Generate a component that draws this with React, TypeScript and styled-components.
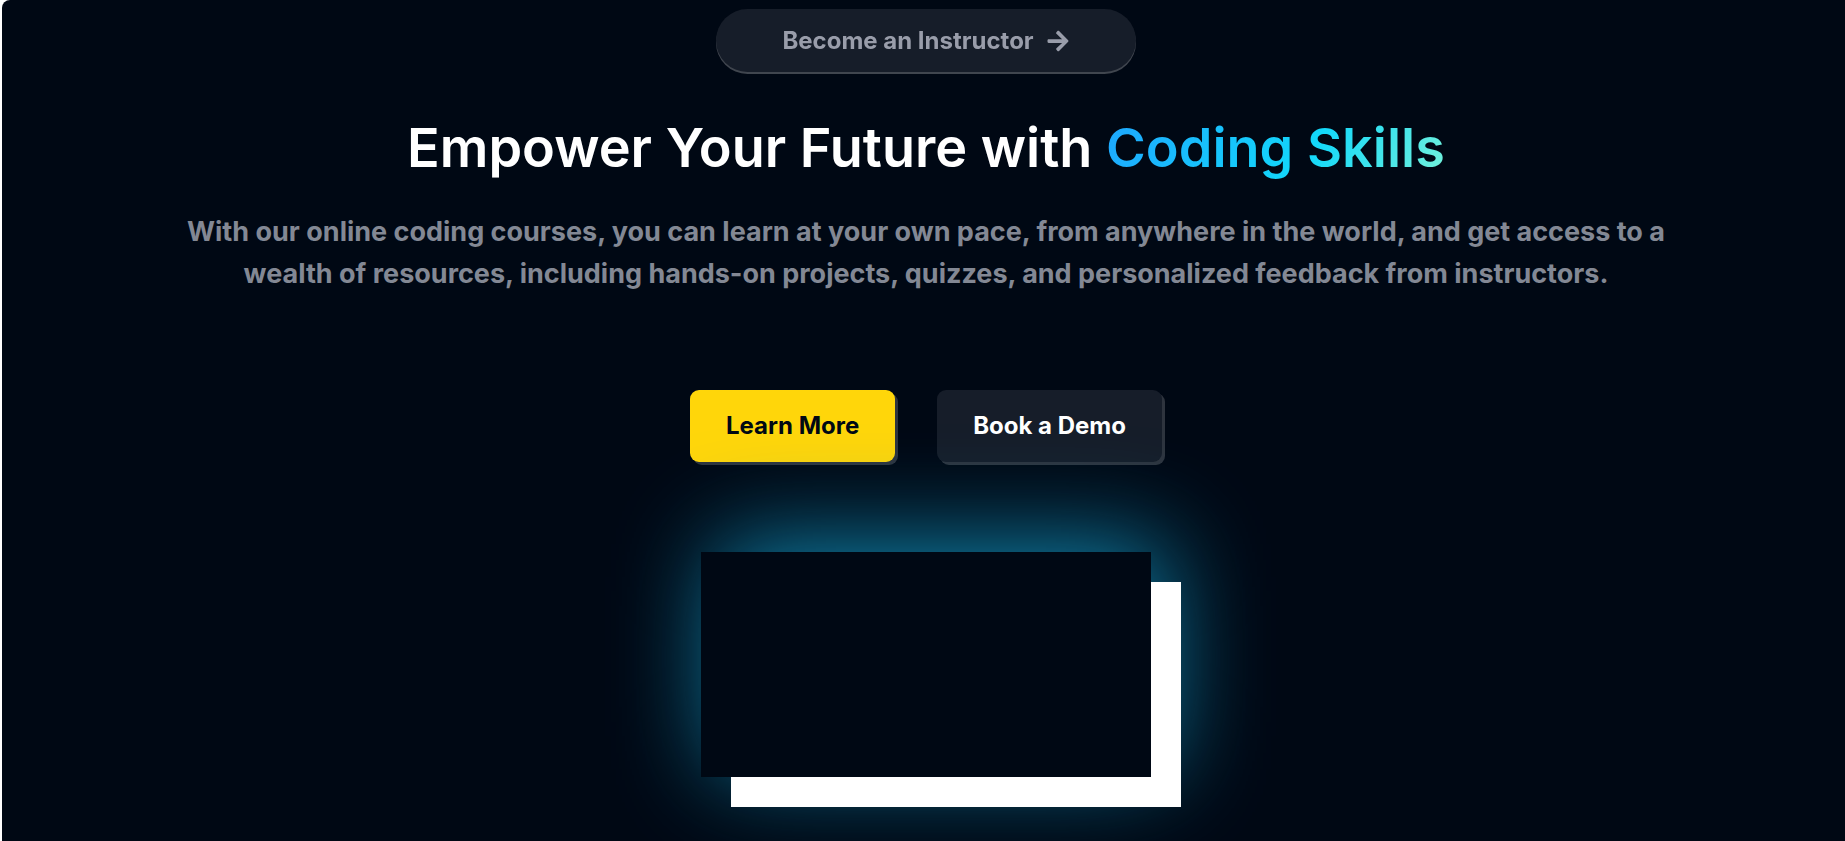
import React from 'react';
import styled, { createGlobalStyle } from 'styled-components';
import { FaArrowRight } from 'react-icons/fa';

const GlobalStyle = createGlobalStyle`
  html, body {
    margin: 0;
    padding: 0;
    background: #ffffff;
  }

  body {
    font-family: Inter, "Noto Sans", "Liberation Sans", sans-serif;
    overflow: hidden;
  }
`;

const Hero = styled.section`
  margin-left: 2px;
  min-height: 100vh;
  padding-left: 5px;
  background: #000814;
  border-top-left-radius: 8px;
  display: flex;
  flex-direction: column;
  align-items: center;
  overflow: hidden;
`;

const InstructorPill = styled.button`
  margin-top: 9px;
  padding: 6px;
  border: none;
  border-radius: 999px;
  background: #161d29;
  color: #999daa;
  font-family: inherit;
  font-size: 24px;
  font-weight: 700;
  cursor: pointer;
  filter: drop-shadow(0 2px 0 rgba(255, 255, 255, 0.25));
`;

const PillInner = styled.span`
  display: flex;
  align-items: center;
  gap: 12px;
  padding: 7.5px 60px;
  line-height: 36px;
`;

const Heading = styled.h1`
  margin: 46px 0 0;
  color: #ffffff;
  font-size: 54px;
  font-weight: 600;
  line-height: 60px;
  text-align: center;
`;

const Highlight = styled.span`
  background: linear-gradient(118deg, #1fa2ff -6%, #12d8fa 60%, #a6ffcb 120%);
  -webkit-background-clip: text;
  background-clip: text;
  color: transparent;
`;

const Subtitle = styled.p`
  margin: 33px 0 0;
  max-width: 1500px;
  color: #838894;
  font-size: 27px;
  font-weight: 700;
  line-height: 42px;
  text-align: center;
`;

const ButtonRow = styled.div`
  margin-top: 95px;
  display: flex;
  gap: 42px;
`;

const CtaButton = styled.button<{ $active?: boolean }>`
  padding: 18px 36px;
  border: none;
  border-radius: 9px;
  background: ${p => (p.$active ? '#ffd60a' : '#161d29')};
  color: ${p => (p.$active ? '#000814' : '#ffffff')};
  font-family: inherit;
  font-size: 24px;
  font-weight: 700;
  line-height: 36px;
  box-shadow: 3px 3px 0 0 rgba(255, 255, 255, 0.18);
  cursor: pointer;
`;

const VideoGlow = styled.div`
  margin-top: 90px;
  box-shadow: 15px -8px 100px 0 #118ab2;
`;

const VideoFrame = styled.div`
  width: 450px;
  height: 225px;
  background: #000814;
  box-shadow: 30px 30px 0 0 #ffffff;
`;

const App: React.FC = () => {
  return (
    <>
      <GlobalStyle />
      <Hero>
        <InstructorPill>
          <PillInner>
            Become an Instructor
            <FaArrowRight />
          </PillInner>
        </InstructorPill>

        <Heading>
          Empower Your Future with <Highlight>Coding Skills</Highlight>
        </Heading>

        <Subtitle>
          With our online coding courses, you can learn at your own pace, from anywhere in the
          world, and get access to a wealth of resources, including hands-on projects, quizzes, and
          personalized feedback from instructors.
        </Subtitle>

        <ButtonRow>
          <CtaButton $active>Learn More</CtaButton>
          <CtaButton>Book a Demo</CtaButton>
        </ButtonRow>

        <VideoGlow>
          <VideoFrame />
        </VideoGlow>
      </Hero>
    </>
  );
};

export default App;
